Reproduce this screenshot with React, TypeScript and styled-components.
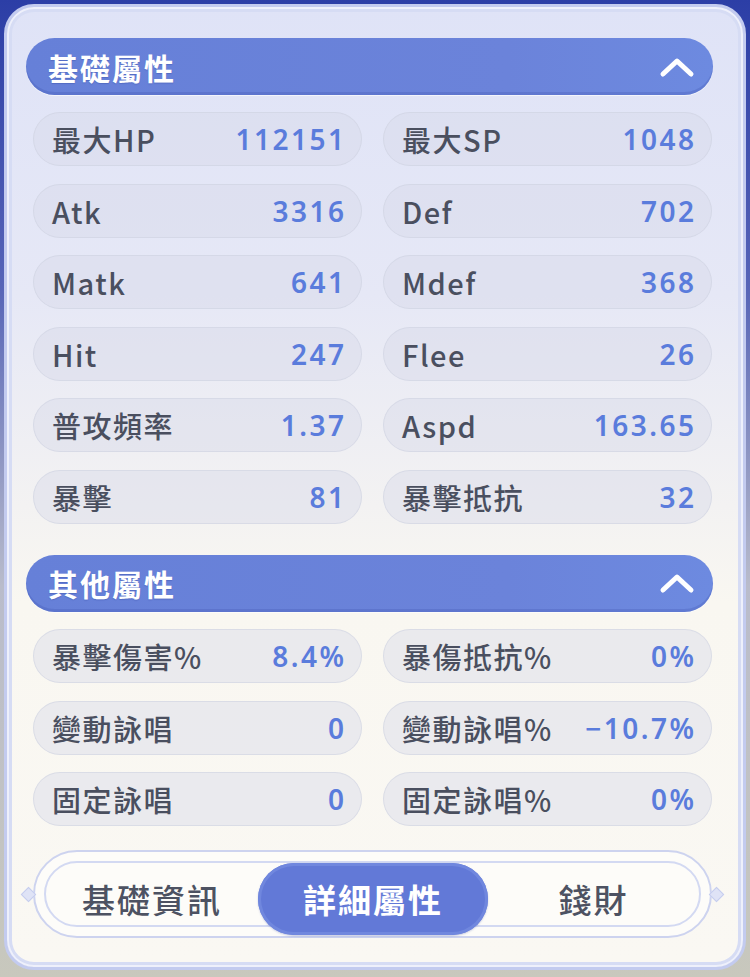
import React from "react";
import styled, { createGlobalStyle } from "styled-components";

const GlobalStyle = createGlobalStyle`
  html, body {
    margin: 0;
    padding: 0;
  }
  body {
    width: 750px;
    height: 977px;
    overflow: hidden;
    background: linear-gradient(180deg, #2c3ea6 0%, #5866b8 30%, #b9bccb 60%, #c8c8bd 100%);
    font-family: "Noto Sans CJK TC", "Noto Sans", sans-serif;
  }
`;

type Stat = { label: string; value: string };

const basicStats: Stat[] = [
  { label: "最大HP", value: "112151" },
  { label: "最大SP", value: "1048" },
  { label: "Atk", value: "3316" },
  { label: "Def", value: "702" },
  { label: "Matk", value: "641" },
  { label: "Mdef", value: "368" },
  { label: "Hit", value: "247" },
  { label: "Flee", value: "26" },
  { label: "普攻頻率", value: "1.37" },
  { label: "Aspd", value: "163.65" },
  { label: "暴擊", value: "81" },
  { label: "暴擊抵抗", value: "32" },
];

const otherStats: Stat[] = [
  { label: "暴擊傷害%", value: "8.4%" },
  { label: "暴傷抵抗%", value: "0%" },
  { label: "變動詠唱", value: "0" },
  { label: "變動詠唱%", value: "−10.7%" },
  { label: "固定詠唱", value: "0" },
  { label: "固定詠唱%", value: "0%" },
];

const tabs = ["基礎資訊", "詳細屬性", "錢財"];

const Chevron = () => (
  <svg width="36" height="22" viewBox="0 0 36 22">
    <polyline
      points="4,18 18,5 32,18"
      fill="none"
      stroke="#ffffff"
      strokeWidth="5"
      strokeLinecap="round"
      strokeLinejoin="round"
    />
  </svg>
);

const Section = ({ title, stats, top }: { title: string; stats: Stat[]; top: number }) => (
  <SectionBox $top={top}>
    <Header>
      <HeaderTitle>{title}</HeaderTitle>
      <Chevron />
    </Header>
    <StatGrid>
      {stats.map((s) => (
        <StatPill key={s.label}>
          <StatLabel>{s.label}</StatLabel>
          <StatValue>{s.value}</StatValue>
        </StatPill>
      ))}
    </StatGrid>
  </SectionBox>
);

const App = () => {
  return (
    <>
      <GlobalStyle />
      <Panel>
        <Section title="基礎屬性" stats={basicStats} top={0} />
        <Section title="其他屬性" stats={otherStats} top={31} />
        <TabBar>
          <Ornament $side="left" />
          <TabInner>
            {tabs.map((t) => (
              <Tab key={t} $active={t === "詳細屬性"}>
                {t}
              </Tab>
            ))}
          </TabInner>
          <Ornament $side="right" />
        </TabBar>
      </Panel>
    </>
  );
};

const Panel = styled.div`
  box-sizing: border-box;
  margin: 4px 4px 0 4px;
  width: 742px;
  height: 966px;
  border-radius: 30px;
  border: 3px solid #c3cbef;
  box-shadow: inset 0 0 0 2px #eef0fb, inset 0 0 0 5px #d6dcf4;
  background: linear-gradient(180deg, #dfe3f7 0%, #e6e8f6 30%, #f3f2f2 52%, #f9f7f1 62%, #faf8f3 100%);
  padding: 31px 30px 0 19px;
  display: flex;
  flex-direction: column;
`;

const SectionBox = styled.div<{ $top: number }>`
  margin-top: ${(p) => p.$top}px;
  display: flex;
  flex-direction: column;
  gap: 17px;
`;

const Header = styled.div`
  height: 57px;
  border-radius: 29px;
  background: linear-gradient(90deg, #6680d8 0%, #6b83da 70%, #6d8ae0 100%);
  box-shadow: inset 0 -3px 0 rgba(60, 80, 170, 0.25), 0 1px 0 rgba(255, 255, 255, 0.6);
  display: flex;
  align-items: center;
  justify-content: space-between;
  padding: 0 18px 0 22px;
`;

const HeaderTitle = styled.span`
  color: #ffffff;
  font-size: 30px;
  font-weight: 700;
  letter-spacing: 2px;
  text-shadow: 0 1px 1px rgba(40, 60, 150, 0.3);
`;

const StatGrid = styled.div`
  display: grid;
  grid-template-columns: 329px 329px;
  column-gap: 21px;
  row-gap: 17.6px;
  padding-left: 7px;
`;

const StatPill = styled.div`
  box-sizing: border-box;
  height: 54px;
  border-radius: 27px;
  background: rgba(214, 218, 232, 0.45);
  border: 1.5px solid rgba(205, 209, 224, 0.55);
  display: flex;
  align-items: center;
  justify-content: space-between;
  padding: 0 17px 0 18px;
`;

const StatLabel = styled.span`
  color: #4a4f5f;
  font-size: 29px;
  font-weight: 500;
  letter-spacing: 1.5px;
  font-family: "Noto Sans CJK TC", "Noto Sans", sans-serif;
`;

const StatValue = styled.span`
  color: #5a7cdc;
  font-size: 28px;
  font-weight: 600;
  letter-spacing: 2.5px;
  margin-right: -2.5px;
  font-family: "Noto Sans", "Open Sans", sans-serif;
`;

const TabBar = styled.div`
  position: relative;
  margin-top: 24px;
  margin-left: 7px;
  width: 679px;
  box-sizing: border-box;
  height: 88px;
  border-radius: 44px;
  border: 2px solid #cdd3ef;
  background: #fdfcf9;
  padding: 9px 9px;
`;

const Ornament = styled.div<{ $side: "left" | "right" }>`
  position: absolute;
  top: 50%;
  ${(p) => (p.$side === "left" ? "left: -12px;" : "right: -12px;")}
  width: 9px;
  height: 9px;
  margin-top: -5px;
  transform: rotate(45deg);
  background: #dfe3f6;
  border: 1px solid #c6cdee;
`;

const TabInner = styled.div`
  box-sizing: border-box;
  height: 66px;
  border-radius: 33px;
  border: 2px solid #d3d9f2;
  display: grid;
  grid-template-columns: 212px 230px 1fr;
  align-items: center;
`;

const Tab = styled.div<{ $active?: boolean }>`
  display: flex;
  align-items: center;
  justify-content: center;
  height: ${(p) => (p.$active ? "72px" : "60px")};
  border-radius: 36px;
  background: ${(p) => (p.$active ? "#6279d7" : "transparent")};
  box-shadow: ${(p) => (p.$active ? "inset 0 0 0 3px #7087de, 0 1px 2px rgba(60,80,170,0.3)" : "none")};
  color: ${(p) => (p.$active ? "#ffffff" : "#4d5262")};
  font-size: 33px;
  font-weight: ${(p) => (p.$active ? 700 : 500)};
  letter-spacing: 2px;
`;

export default App;
